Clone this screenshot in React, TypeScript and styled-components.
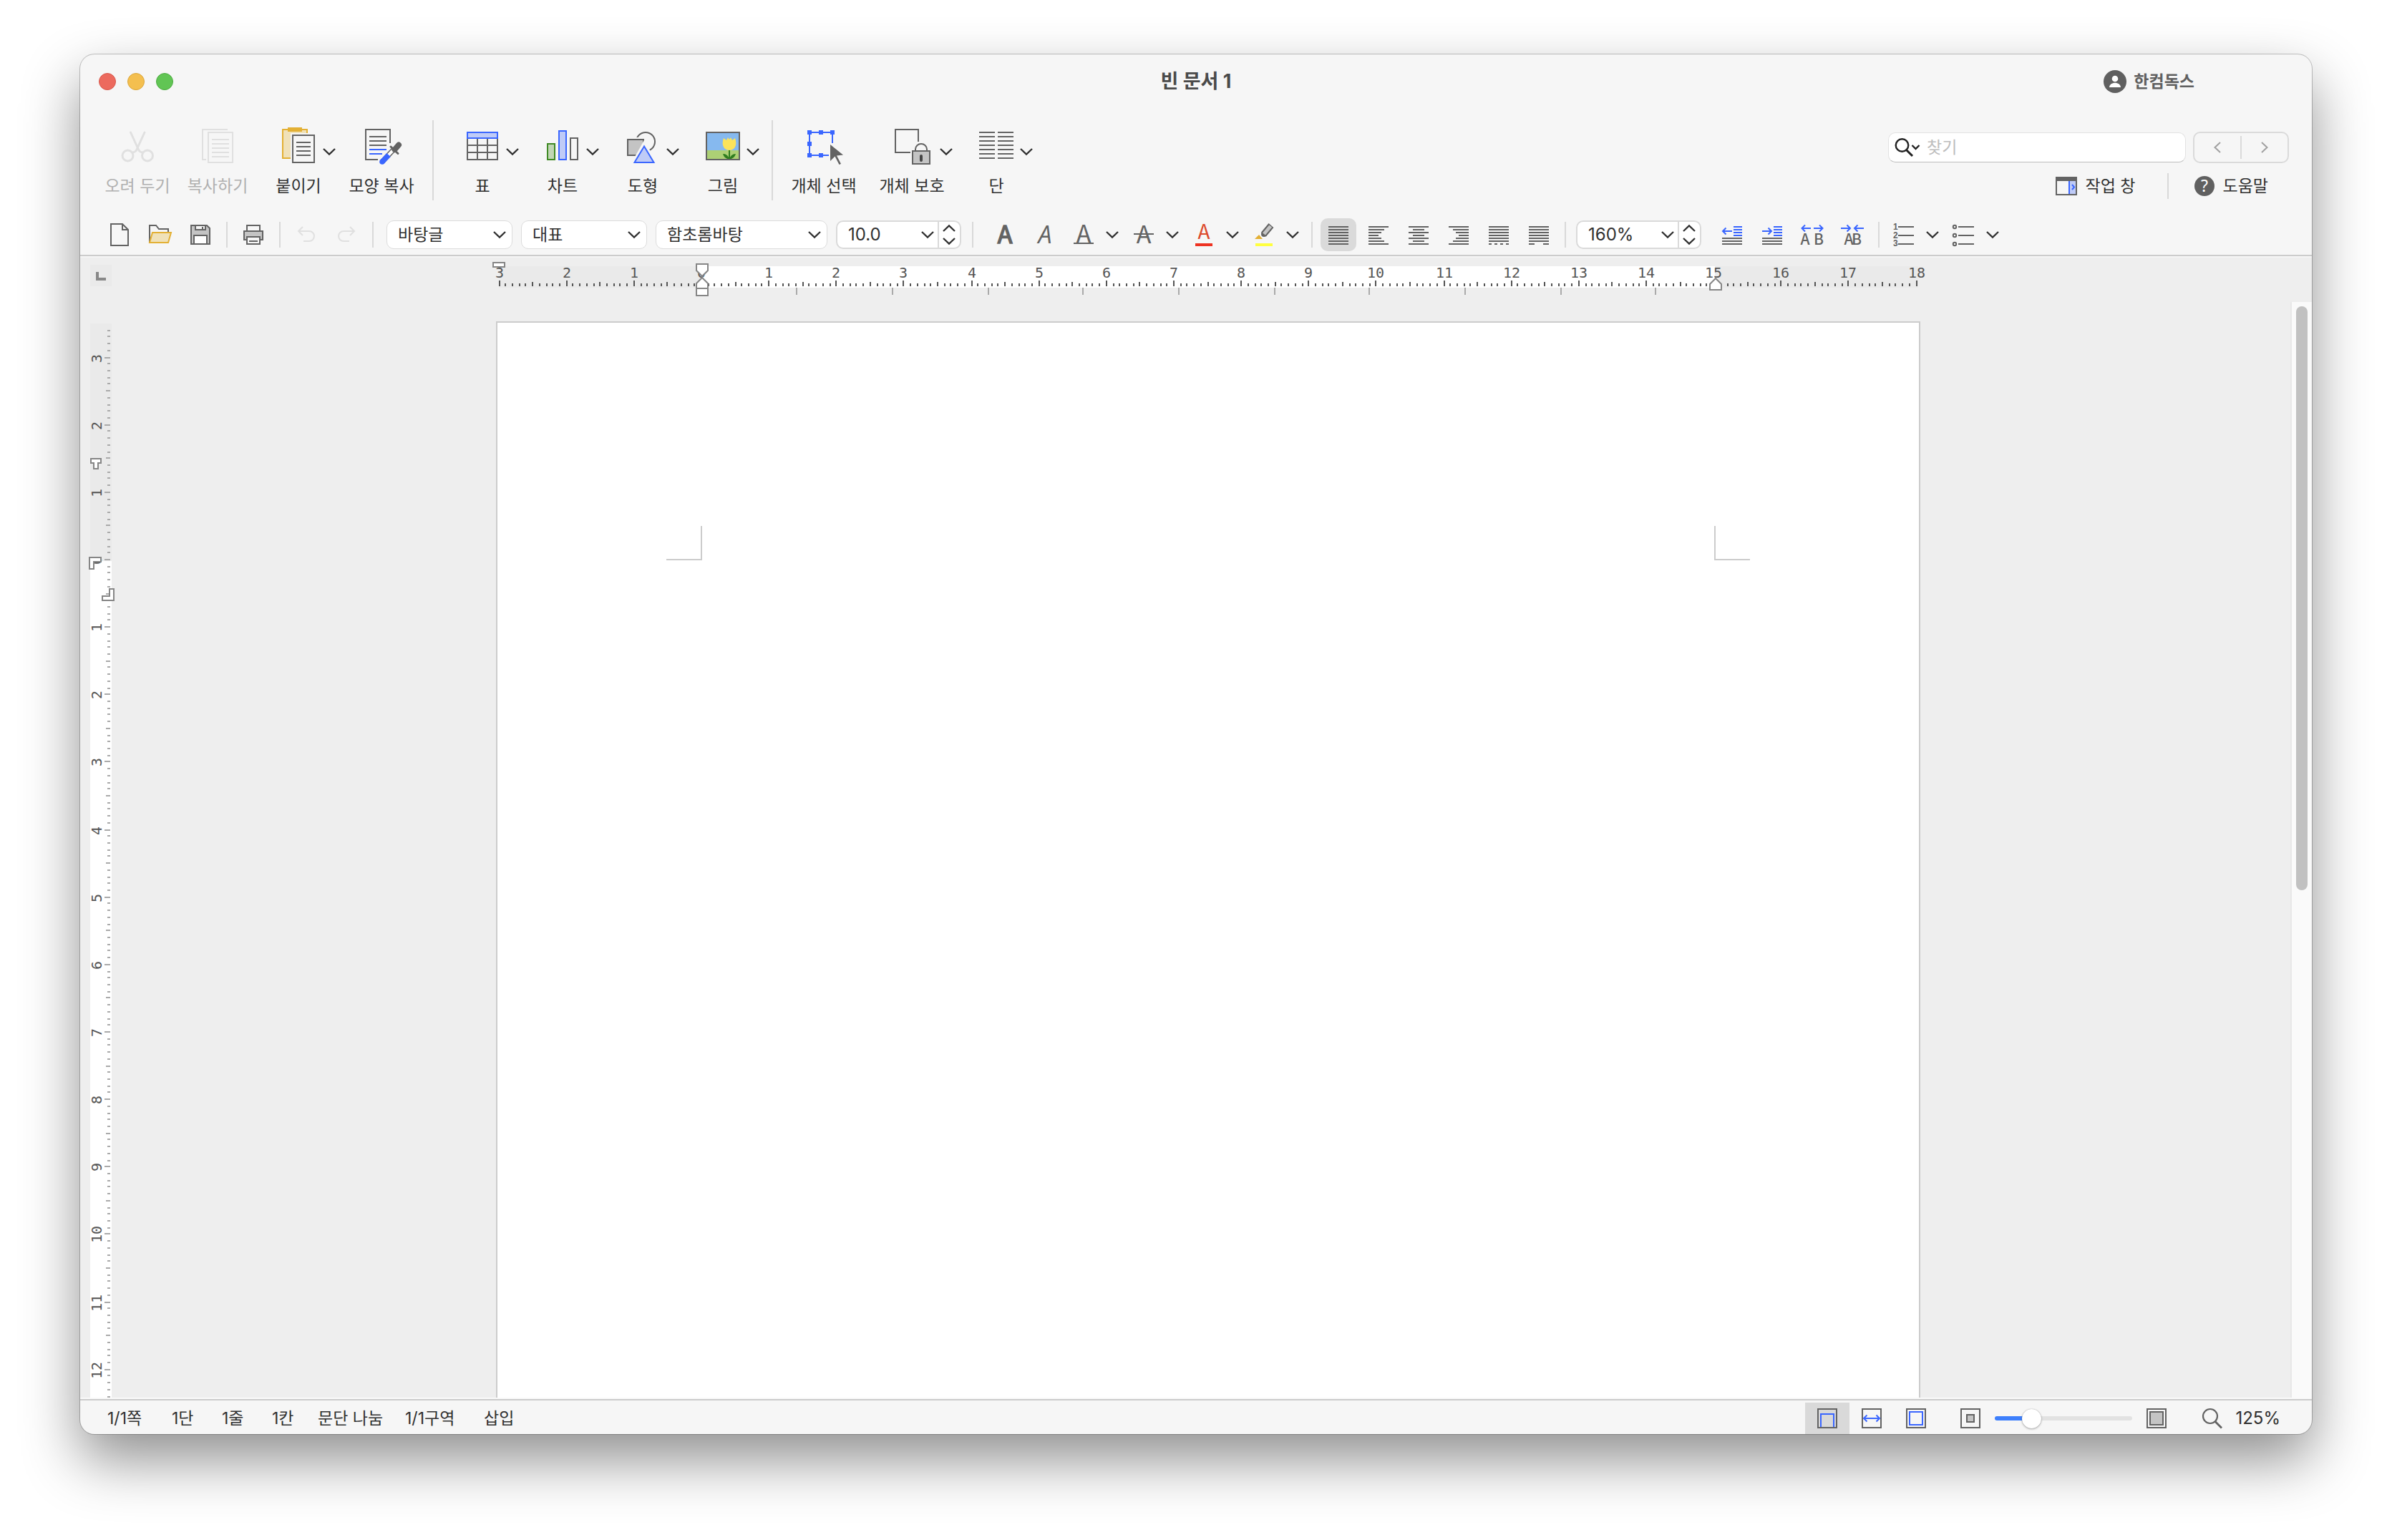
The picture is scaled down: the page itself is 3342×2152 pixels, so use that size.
import React from "react";
import styled, { createGlobalStyle } from "styled-components";

const GRAY = "#636363";
const MID = "#c4c4c4";
const BLUE = "#3a66ff";
const SKY = "#bfcbf7";
const GOLD = "#e3b034";
const SAND = "#f0e1b8";
const OFF = "#e0e0e0";
const CHROME = "#f6f6f6";
const SANS = `Inter, "Noto Sans CJK KR", sans-serif`;

const GlobalStyle = createGlobalStyle`
  *, *::before, *::after { box-sizing: border-box; }
  body { margin: 0; background: #fff; font-family: ${SANS}; color: #303030; }
  button, input, select { font: inherit; color: inherit; }
  svg { display: block; overflow: visible; flex: none; }
`;

/* ---------- Window ---------- */

const Desktop = styled.div`
  height: 100vh;
  padding: 76px 112px 148px;
  display: flex;
`;

const Window = styled.div`
  flex: 1;
  min-width: 0;
  display: flex;
  flex-direction: column;
  overflow: hidden;
  border-radius: 20px;
  background: ${CHROME};
  box-shadow: 0 0 0 1px rgba(0, 0, 0, 0.22), 0 36px 80px rgba(0, 0, 0, 0.44);
`;

const TitleBar = styled.header`
  height: 76px;
  display: grid;
  grid-template-columns: 1fr auto 1fr;
  align-items: center;
`;

const Lights = styled.div`
  display: flex;
  gap: 16px;
  padding-left: 26px;
`;

const Light = styled.button<{ $fill: string; $edge: string }>`
  width: 24px;
  height: 24px;
  padding: 0;
  border: 1px solid ${(p) => p.$edge};
  border-radius: 50%;
  background: ${(p) => p.$fill};
`;

const Title = styled.h1`
  margin: 0;
  font-size: 27px;
  line-height: 36px;
  font-weight: 700;
  color: #4a4a4a;
`;

const Account = styled.button`
  justify-self: end;
  display: flex;
  align-items: center;
  gap: 10px;
  margin-right: 164px;
  padding: 0;
  border: 0;
  background: none;
  font-size: 23px;
  line-height: 32px;
  font-weight: 700;
  color: #606060;
`;

/* ---------- Ribbon ---------- */

const Ribbon = styled.div`
  height: 148px;
  display: flex;
  align-items: flex-start;
  padding: 0 32px 0 24px;
`;

const Divider = styled.span<{ $top: number; $height: number; $before: number; $after: number }>`
  flex: none;
  width: 2px;
  height: ${(p) => p.$height}px;
  margin: ${(p) => p.$top}px ${(p) => p.$after}px 0 ${(p) => p.$before}px;
  background: #d9d9d9;
`;

const EditTools = styled.div`
  display: grid;
  grid-template-columns: 112px 112px 112px 122px;
  padding-top: 24px;
`;

const InsertTools = styled.div`
  display: flex;
  gap: 28px;
  padding-top: 24px;
`;

const ToolCell = styled.div`
  display: flex;
  align-items: flex-start;
  justify-content: flex-end;
`;

const Tool = styled.button<{ $width?: number }>`
  width: ${(p) => p.$width ?? 60}px;
  display: flex;
  flex-direction: column;
  align-items: center;
  gap: 14px;
  padding: 0;
  border: 0;
  background: none;
  font-size: 23px;
  line-height: 28px;
  white-space: nowrap;
  &:disabled { color: #b0b0b0; }
`;

const ArrowButton = styled.button<{ $width: number; $height: number }>`
  width: ${(p) => p.$width}px;
  height: ${(p) => p.$height}px;
  display: flex;
  align-items: center;
  justify-content: center;
  padding: 0;
  border: 0;
  background: none;
`;

const Utilities = styled.div`
  margin-left: auto;
  padding-top: 32px;
  display: flex;
  flex-direction: column;
  gap: 14px;
`;

const SearchRow = styled.div`
  display: flex;
  align-items: center;
  gap: 10px;
`;

const SearchBox = styled.label`
  width: 416px;
  height: 42px;
  display: flex;
  align-items: center;
  gap: 10px;
  padding-left: 9px;
  border: 1px solid #e2e2e2;
  border-bottom-color: #bdbdbd;
  border-radius: 10px;
  background: #fff;
`;

const SearchInput = styled.input`
  flex: 1;
  min-width: 0;
  padding: 0;
  border: 0;
  outline: 0;
  background: none;
  font-size: 23px;
  line-height: 32px;
  &::placeholder { color: #bdbdbd; opacity: 1; }
`;

const Stepper = styled.div`
  width: 134px;
  height: 44px;
  display: flex;
  align-items: center;
  border: 2px solid #dadada;
  border-radius: 10px;
`;

const StepButton = styled.button`
  flex: 1;
  height: 32px;
  display: grid;
  place-items: center;
  padding: 0;
  border: 0;
  background: none;
  & + & { border-left: 2px solid #dadada; }
`;

const LinkRow = styled.div`
  height: 36px;
  display: flex;
  align-items: center;
  justify-content: flex-end;
  padding-right: 29px;
`;

const LinkButton = styled.button`
  display: flex;
  align-items: center;
  gap: 12px;
  padding: 0;
  border: 0;
  background: none;
  font-size: 23px;
  line-height: 28px;
`;

/* ---------- Format bar ---------- */

const FormatBar = styled.div`
  height: 56px;
  display: flex;
  align-items: center;
  padding: 0 28px;
`;

const Group = styled.div<{ $gap?: number }>`
  display: flex;
  align-items: center;
  gap: ${(p) => p.$gap ?? 0}px;
`;

const IndentGroup = styled(Group)`
  margin-left: 15px;
`;

const IconButton = styled.button<{ $width?: number; $active?: boolean }>`
  width: ${(p) => p.$width ?? 56}px;
  height: 46px;
  display: grid;
  place-items: center;
  padding: 0;
  border: 0;
  border-radius: 10px;
  background: ${(p) => (p.$active ? "#dadada" : "none")};
`;

const SelectShell = styled.div<{ $width: number }>`
  width: ${(p) => p.$width}px;
  height: 40px;
  display: grid;
  align-items: center;
  border: 1px solid #dcdcdc;
  border-radius: 10px;
  background: #fff;
  & > * { grid-area: 1 / 1; }
  & > svg { justify-self: end; margin-right: 8px; pointer-events: none; }
`;

const Select = styled.select`
  width: 100%;
  height: 38px;
  padding: 0 32px 0 15px;
  border: 0;
  border-radius: 10px;
  outline: 0;
  background: none;
  appearance: none;
  font-size: 23px;
`;

const NumberShell = styled.div`
  width: 175px;
  height: 40px;
  display: flex;
  align-items: center;
  overflow: hidden;
  border: 2px solid #dadada;
  border-radius: 10px;
  background: #fff;
`;

const NumberInput = styled.input`
  flex: 1;
  min-width: 0;
  padding: 0 0 0 15px;
  border: 0;
  outline: 0;
  background: none;
  font-size: 24px;
  line-height: 32px;
`;

const Spinner = styled.div`
  width: 31px;
  height: 36px;
  display: grid;
  grid-template-rows: 1fr 1fr;
  border-left: 2px solid #dadada;
`;

/* ---------- Work area ---------- */

const Workspace = styled.div`
  flex: 1;
  min-height: 0;
  display: grid;
  grid-template-columns: 64px minmax(0, 1fr) 30px;
  grid-template-rows: 62px minmax(0, 1fr);
  border-top: 2px solid #cccccc;
  box-shadow: inset 0 2px 0 #f5f5f5, inset 0 -2px 0 #fafafa;
  background: #eeeeee;
  padding: 2px 0;
`;

const TabCorner = styled.button`
  width: 30px;
  height: 30px;
  margin: 10px 0 0 14px;
  padding: 0;
  border: 0;
  background: #eaeaea;
`;

const RulerLane = styled.div`
  grid-column: 2 / 4;
  padding-right: 30px;
  display: flex;
  justify-content: center;
`;

const SideRuler = styled.div`
  overflow: hidden;
`;

const Canvas = styled.main`
  display: flex;
  justify-content: center;
  padding-top: 27px;
  overflow: hidden;
`;

const Page = styled.section`
  width: 1990px;
  flex: none;
  display: flex;
  justify-content: space-between;
  padding: 284px 236px 0;
  border: 2px solid #cccccc;
  border-bottom: 0;
  background: #fff;
`;

const MarginMark = styled.span<{ $side: "left" | "right" }>`
  width: 50px;
  height: 48px;
  border-bottom: 2px solid #cccccc;
  border-${(p) => (p.$side === "left" ? "right" : "left")}: 2px solid #cccccc;
`;

const ScrollTrack = styled.div`
  padding: 6px 6px 0;
  border-left: 2px solid #e8e8e8;
  background: #fafafa;
`;

const ScrollThumb = styled.div`
  width: 16px;
  height: 53.5%;
  border-radius: 8px;
  background: #c1c1c1;
`;

/* ---------- Status bar ---------- */

const StatusBar = styled.footer`
  height: 49px;
  display: flex;
  align-items: center;
  justify-content: space-between;
  border-top: 2px solid #cccccc;
  padding: 2px 44px 0 38px;
`;

const StatusInfo = styled.div`
  display: grid;
  grid-template-columns: 90px 70px 70px 64px 122px 110px auto;
  font-size: 23px;
  line-height: 32px;
  white-space: nowrap;
`;

const StatusView = styled.div`
  display: flex;
  align-items: center;
`;

const ViewButton = styled.button<{ $active?: boolean }>`
  width: 62px;
  height: 44px;
  display: grid;
  place-items: center;
  padding: 0;
  border: 0;
  background: ${(p) => (p.$active ? "#d9d9d9" : "none")};
`;

const ZoomControl = styled.div`
  display: flex;
  align-items: center;
  margin-left: 29px;
`;

const ZoomEdge = styled.button`
  width: 32px;
  height: 44px;
  display: grid;
  place-items: center;
  padding: 0;
  border: 0;
  background: none;
`;

const ZoomSlider = styled.input`
  width: 192px;
  height: 28px;
  margin: 0 18px;
  appearance: none;
  background: none;
  &::-webkit-slider-runnable-track {
    height: 6px;
    border-radius: 3px;
    background: linear-gradient(to right, #3d7ffc 27%, #e2e2e2 27%);
  }
  &::-webkit-slider-thumb {
    appearance: none;
    width: 27px;
    height: 27px;
    margin-top: -10px;
    border-radius: 50%;
    background: #fff;
    box-shadow: 0 0 1px rgba(0, 0, 0, 0.35), 0 1px 3px rgba(0, 0, 0, 0.3);
  }
`;

const ZoomValue = styled.button`
  display: flex;
  align-items: center;
  gap: 18px;
  margin-left: 48px;
  padding: 0;
  border: 0;
  background: none;
  font-size: 24px;
  line-height: 32px;
`;

/* ---------- Icons ---------- */

type Kids = { children?: React.ReactNode };

const Big = ({ children }: Kids) => (
  <svg width="48" height="56" viewBox="0 0 48 56" fill="none" stroke={GRAY} strokeWidth="2" aria-hidden="true">
    {children}
  </svg>
);

const Small = ({ children }: Kids) => (
  <svg width="32" height="40" viewBox="0 0 32 40" fill="none" stroke={GRAY} strokeWidth="2" aria-hidden="true">
    {children}
  </svg>
);

const Box = ({ children }: Kids) => (
  <svg width="32" height="32" viewBox="0 0 32 32" fill="none" stroke={GRAY} strokeWidth="2" aria-hidden="true">
    <rect x="3" y="3" width="26" height="26" />
    {children}
  </svg>
);

const Down = () => (
  <svg width="18" height="10" viewBox="0 0 18 10" fill="none" stroke="#303030" strokeWidth="2.3" aria-hidden="true">
    <path d="M1 1L9 8.6L17 1" />
  </svg>
);

const Up = () => (
  <svg width="18" height="10" viewBox="0 0 18 10" fill="none" stroke="#303030" strokeWidth="2.3" aria-hidden="true">
    <path d="M1 9L9 1.4L17 9" />
  </svg>
);

const CutIcon = () => (
  <Big>
    <g stroke={OFF} strokeWidth="3" strokeLinecap="round">
      <path d="M14.5 9L25.5 33Q27 36.5 31 37" />
      <path d="M34 9L23 33Q21.5 36.5 17.5 37" />
      <circle cx="10.5" cy="41.5" r="7.5" />
      <circle cx="38" cy="41.5" r="7.5" />
    </g>
  </Big>
);

const CopyIcon = () => (
  <Big>
    <g stroke={OFF}>
      <path d="M38 5H3V47H8" />
      <rect x="11" y="9" width="34" height="42" />
      <path d="M16 19H40M16 25H40M16 31H40M16 37H40M16 43H40" />
    </g>
  </Big>
);

const PasteIcon = () => (
  <Big>
    <rect x="2" y="5" width="34" height="40" fill={SAND} stroke={GOLD} />
    <rect x="9" y="2" width="20" height="6" fill={GOLD} stroke="none" />
    <rect x="13" y="10" width="26" height="38" fill={CHROME} stroke="none" />
    <rect x="16" y="13" width="30" height="38" />
    <path d="M21 23H41M21 29H41M21 35H41M21 41H41" />
  </Big>
);

const BrushIcon = () => (
  <Big>
    <path d="M19 47H2V5H36V24" />
    <path d="M7 15H31M7 21H31M7 27H31" />
    <path d="M7 33H31M7 39H25" stroke={BLUE} />
    <path d="M25.5 49.5L40 34" strokeWidth="7" strokeLinecap="round" />
    <path d="M31 43.5L40 34" stroke="#fff" strokeWidth="4" />
    <path d="M25.5 49.5L34 40.5" stroke={BLUE} strokeWidth="7.5" />
    <circle cx="25" cy="50" r="3.8" fill={BLUE} stroke="none" />
    <path d="M37 29L47 38.5" strokeWidth="3" strokeLinecap="round" />
    <path d="M42.5 33L48 26.5" strokeWidth="8" strokeLinecap="round" />
  </Big>
);

const TableIcon = () => (
  <Big>
    <path d="M3 18V47H45V18M17 18V47M31 18V47M3 27H45M3 37H45" />
    <rect x="3" y="9" width="42" height="8" fill={SKY} stroke={BLUE} />
  </Big>
);

const ChartIcon = () => (
  <Big>
    <rect x="3" y="25" width="10" height="22" fill="#c1d6b5" stroke="#3f8a24" />
    <rect x="19" y="7" width="10" height="40" fill={SKY} stroke={BLUE} />
    <rect x="35" y="17" width="10" height="30" />
  </Big>
);

const ShapeIcon = () => (
  <Big>
    <circle cx="28" cy="22" r="13" />
    <rect x="0" y="16" width="27" height="26" fill={CHROME} stroke="none" />
    <rect x="3" y="19" width="22" height="22" fill={MID} />
    <path d="M26 26L12 51H40Z" fill={SKY} stroke={CHROME} strokeWidth="6" />
    <path d="M26 28.5L12.5 51H39.5Z" fill={SKY} stroke={BLUE} />
  </Big>
);

const PictureIcon = () => (
  <Big>
    <rect x="1" y="9" width="46" height="38" fill="#86b9ef" stroke="none" />
    <rect x="1" y="34" width="46" height="13" fill="#add075" stroke="none" />
    <path d="M33 33V47" stroke="#2f7d1f" />
    <path d="M33 46.5Q26 46 24 39Q31 39 33 46.5ZM33 46.5Q40 46 42 39Q35 39 33 46.5Z" fill="#2f7d1f" stroke="none" />
    <path d="M25 17L29 20L31 16L33 19L35 16L37 20L41 17Q43 22 42 27Q40 34 33 34Q26 34 24 27Q23 22 25 17Z" fill="#fce35a" stroke="none" />
    <rect x="1" y="9" width="46" height="38" />
  </Big>
);

const PickIcon = () => (
  <Big>
    <path d="M36 24V9H4V41H31" stroke={BLUE} />
    {[[4, 9], [20, 9], [36, 9], [4, 25], [4, 41], [20, 41]].map(([x, y]) => (
      <rect key={`${x}-${y}`} x={x - 3} y={y - 3} width="6" height="6" fill={BLUE} stroke="none" />
    ))}
    <path d="M33 26L51 40.5L42 41.5L48 53L45.5 54L39.5 42.5L33 49Z" fill={GRAY} stroke="none" />
  </Big>
);

const LockIcon = () => (
  <Big>
    <path d="M33 22V5H1V37H22" />
    <path d="M29 35V32.5A8 7.5 0 0 1 45 32.5V35" />
    <rect x="25" y="35" width="24" height="18" fill={MID} />
    <rect x="35" y="40" width="4" height="10" rx="2" fill="#444" stroke="none" />
  </Big>
);

const ColumnIcon = () => (
  <Big>
    {[9, 15, 21, 27, 33, 39, 45].map((y) => (
      <path key={y} d={`M0 ${y}H22M26 ${y}H48`} />
    ))}
  </Big>
);

const NewIcon = () => (
  <Small>
    <path d="M3 5H19L27 13V35H3Z" />
    <path d="M19 5V13H27" />
  </Small>
);

const OpenIcon = () => (
  <Small>
    <path d="M1 31V7H10L14 12H27V17" />
    <path d="M5 17H31L27 31H1Z" fill={SAND} stroke={GOLD} />
  </Small>
);

const SaveIcon = () => (
  <Small>
    <path d="M3 7H25L29 11V33H3Z" fill={MID} />
    <rect x="9" y="7" width="14" height="6" fill={CHROME} />
    <path d="M19 9V12" />
    <rect x="7" y="21" width="18" height="12" fill="#fff" />
  </Small>
);

const PrintIcon = () => (
  <Small>
    <rect x="7" y="7" width="18" height="8" />
    <rect x="3" y="15" width="26" height="12" fill={MID} />
    <rect x="7" y="23" width="18" height="10" fill={CHROME} />
    <path d="M10 29H22" />
  </Small>
);

const UndoIcon = () => (
  <Small>
    <path d="M11 9L5 15L11 21M5 15H20A7 7 0 0 1 20 29H12" stroke={OFF} />
  </Small>
);

const RedoIcon = () => (
  <Small>
    <path d="M21 9L27 15L21 21M27 15H12A7 7 0 0 0 12 29H20" stroke={OFF} />
  </Small>
);

type LetterProps = Kids & { size?: number; bold?: boolean; italic?: boolean; color?: string; y?: number };

const LetterIcon = ({ size = 34, bold, italic, color = GRAY, y = 32, children }: LetterProps) => (
  <Small>
    <text
      x="16"
      y={y}
      textAnchor="middle"
      fill={color}
      stroke={bold ? color : "none"}
      strokeWidth="1.5"
      fontFamily={italic ? '"Open Sans", sans-serif' : '"Noto Sans CJK KR", sans-serif'}
      fontSize={size}
      fontStyle={italic ? "italic" : "normal"}
    >
      A
    </text>
    {children}
  </Small>
);

const MarkerIcon = () => (
  <Small>
    <path d="M26 7L15.5 19.5" strokeWidth="9" />
    <circle cx="16" cy="19" r="4" fill={GRAY} stroke="none" />
    <path d="M25.2 8L16 19" stroke={MID} strokeWidth="5" />
    <path d="M3 26L9 20L14 26Z" fill={GOLD} stroke="none" />
    <rect x="4" y="32" width="24" height="4" fill="#ffff3f" stroke="none" />
  </Small>
);

/* Each entry is one text line, as [start, end] segments. */
const ROWS = [9, 13, 17, 21, 25, 29, 33];
const FULL: number[][] = [[2, 30]];
const fromEdges = (ends: number[][]) => ends.map((e) => [e]);
const ALIGNS: { name: string; rows: number[][][] }[] = [
  { name: "양쪽 정렬", rows: ROWS.map(() => FULL) },
  { name: "왼쪽 정렬", rows: fromEdges([[2, 30], [2, 24], [2, 20], [2, 16], [2, 20], [2, 24], [2, 30]]) },
  { name: "가운데 정렬", rows: fromEdges([[2, 30], [8, 24], [2, 30], [8, 24], [2, 30], [8, 24], [2, 30]]) },
  { name: "오른쪽 정렬", rows: fromEdges([[2, 30], [8, 30], [12, 30], [16, 30], [12, 30], [8, 30], [2, 30]]) },
  { name: "배분 정렬", rows: [...ROWS.slice(1).map(() => FULL), [[2, 6], [10, 14], [18, 22], [26, 30]]] },
  { name: "나눔 정렬", rows: [...ROWS.slice(1).map(() => FULL), [[2, 10], [22, 30]]] },
];

const AlignIcon = ({ rows }: { rows: number[][][] }) => (
  <Small>
    {rows.map((segments, i) => (
      <path key={i} d={segments.map(([a, b]) => `M${a} ${ROWS[i]}H${b}`).join("")} />
    ))}
  </Small>
);

const IndentIcon = ({ out }: { out?: boolean }) => (
  <Small>
    <path d="M18 9H30M18 13H30M18 17H30M18 21H30" stroke={BLUE} />
    <path d={out ? "M16 15H3M7.5 10.5L3 15L7.5 19.5" : "M2 15H15M10.5 10.5L15 15L10.5 19.5"} stroke={BLUE} />
    <path d="M2 25H30M2 29H30M2 33H30" />
  </Small>
);

const SpacingIcon = ({ wide }: { wide?: boolean }) => (
  <Small>
    <path
      d={
        wide
          ? "M14 11H1.5M6 6.5L1.5 11L6 15.5M18 11H30.5M26 6.5L30.5 11L26 15.5"
          : "M0 11H13M8.5 6.5L13 11L8.5 15.5M32 11H19M23.5 6.5L19 11L23.5 15.5"
      }
      stroke={BLUE}
    />
    <g fill={GRAY} stroke="none" fontFamily='"Noto Sans CJK KR", sans-serif' fontSize="21" fontWeight="500" textAnchor="middle">
      <text x={wide ? 6 : 11} y="34">A</text>
      <text x={wide ? 25 : 22} y="34">B</text>
    </g>
  </Small>
);

const NumberedIcon = () => (
  <Small>
    <path d="M8 9H30M8 21H30M8 33H30" />
    <g fill={GRAY} stroke="none" fontFamily='"Liberation Sans", sans-serif' fontSize="12" fontWeight="700">
      <text x="1" y="13">1</text>
      <text x="1" y="25">2</text>
      <text x="1" y="36">3</text>
    </g>
  </Small>
);

const BulletIcon = () => (
  <Small>
    <path d="M8 9H30M8 21H30M8 33H30" />
    {[9, 21, 33].map((y) => <circle key={y} cx="3" cy={y} r="2.2" />)}
  </Small>
);

const Lens = ({ color, size }: { color: string; size: number }) => (
  <svg width={size} height={size} viewBox="0 0 28 28" fill="none" stroke={color} strokeWidth="2.2" aria-hidden="true">
    <circle cx="11" cy="11" r="10" />
    <path d="M18 18.5L27 27.5" strokeWidth="2.8" />
  </svg>
);

/* ---------- Rulers ---------- */

const MM = 4.7143;
const range = (from: number, to: number) => Array.from({ length: to - from + 1 }, (_, i) => from + i);
const tickAt = (mm: number) => 2 * Math.floor(mm * MM);
const tickSize = (mm: number) => (mm % 10 === 0 ? 8 : mm % 5 === 0 ? 6 : 4);

const HorizontalRuler = () => (
  <svg width="1990" height="62" viewBox="0 0 1990 62" role="img" aria-label="가로 눈금자">
    <rect x="4" y="12" width="1983" height="30" fill="#eaeaea" />
    <rect x="288" y="12" width="1415" height="30" fill="#fff" />
    <g fill="#555" fontFamily='"DejaVu Sans Mono", monospace' fontSize="20" textAnchor="middle">
      {range(0, 210).map((mm) => (
        <rect key={mm} x={4 + tickAt(mm)} y={40 - tickSize(mm)} width="2" height={tickSize(mm)} />
      ))}
      {range(0, 21).map((cm) => (
        <text key={cm} x={5 + tickAt(cm * 10)} y="28">{Math.abs(cm - 3)}</text>
      ))}
    </g>
    {range(1, 10).map((n) => (
      <rect key={n} x={287 + 2 * Math.floor(n * 66.67)} y="42" width="2" height="10" fill="#aaa" />
    ))}
    <g fill="#fff" stroke="#868686" strokeWidth="2">
      <rect x="-4" y="7" width="16" height="6" />
      <path d="M280 9H296V18L288 26L280 18Z" />
      <path d="M288 28L296 36V43H280V36Z" />
      <rect x="280" y="43" width="16" height="10" />
      <path d="M1704 29L1712 37V45H1696V37Z" />
    </g>
  </svg>
);

const VerticalRuler = () => (
  <svg width="64" height="100%" role="img" aria-label="세로 눈금자">
    <rect x="14" y="30" width="30" height="332" fill="#eaeaea" />
    <rect x="14" y="362" width="30" height="100%" fill="#fff" />
    {range(-4, 260).map((mm) => (
      <rect key={mm} x={42 - tickSize(mm)} y={77 + tickAt(mm)} width={tickSize(mm)} height="2" fill="#aaa" />
    ))}
    <g fill="#555" fontFamily='"DejaVu Sans Mono", monospace' fontSize="20" textAnchor="middle">
      {range(0, 15).map((cm) => (
        <text key={cm} transform={`translate(30 ${79 + tickAt(cm * 10)}) rotate(-90)`}>{Math.abs(cm - 3)}</text>
      ))}
    </g>
    <g fill="#fff" stroke="#868686" strokeWidth="2">
      <path d="M15 219H29V225H25V233H19V225H15Z" />
      <path d="M13 357H29V363H19V373H13Z" />
      <path d="M41 401H47V417H31V411H41Z" />
    </g>
  </svg>
);

/* ---------- Composite controls ---------- */

type SplitToolProps = { label: string; icon: React.ReactNode; width?: number };

const SplitTool = ({ label, icon, width }: SplitToolProps) => (
  <ToolCell>
    <Tool $width={width}>
      {icon}
      {label}
    </Tool>
    <ArrowButton $width={24} $height={72} aria-label={`${label} 더 보기`}>
      <Down />
    </ArrowButton>
  </ToolCell>
);

const SplitIcon = ({ label, children }: Kids & { label: string }) => (
  <Group>
    <IconButton $width={52} aria-label={label}>{children}</IconButton>
    <ArrowButton $width={28} $height={46} aria-label={`${label} 더 보기`}>
      <Down />
    </ArrowButton>
  </Group>
);

const DropDown = ({ label, value, width }: { label: string; value: string; width: number }) => (
  <SelectShell $width={width}>
    <Select aria-label={label} defaultValue={value}>
      <option value={value}>{value}</option>
    </Select>
    <Down />
  </SelectShell>
);

const NumberBox = ({ label, value }: { label: string; value: string }) => (
  <NumberShell>
    <NumberInput aria-label={label} defaultValue={value} />
    <ArrowButton $width={28} $height={36} aria-label={`${label} 목록`}>
      <Down />
    </ArrowButton>
    <Spinner>
      <ArrowButton $width={27} $height={18} aria-label={`${label} 늘리기`}><Up /></ArrowButton>
      <ArrowButton $width={27} $height={18} aria-label={`${label} 줄이기`}><Down /></ArrowButton>
    </Spinner>
  </NumberShell>
);

const BarDivider = ({ before = 8, after = 8 }: { before?: number; after?: number }) => (
  <Divider $top={0} $height={36} $before={before} $after={after} />
);

export default function App() {
  return (
    <>
      <GlobalStyle />
      <Desktop>
        <Window>
          <TitleBar>
            <Lights>
              <Light $fill="#ec6a5e" $edge="#d8584c" aria-label="닫기" />
              <Light $fill="#f4bf4f" $edge="#dba63a" aria-label="최소화" />
              <Light $fill="#61c554" $edge="#4dab41" aria-label="확대" />
            </Lights>
            <Title>빈 문서 1</Title>
            <Account>
              <svg width="32" height="32" viewBox="0 0 32 32" aria-hidden="true">
                <circle cx="16" cy="16" r="16" fill="#606060" />
                <circle cx="16" cy="12" r="4.3" fill="#fff" />
                <path d="M8 24C8.5 15.5 23.5 15.5 24 24Z" fill="#fff" />
              </svg>
              한컴독스
            </Account>
          </TitleBar>

          <Ribbon>
            <EditTools>
              <Tool $width={112} disabled><CutIcon />오려 두기</Tool>
              <Tool $width={112} disabled><CopyIcon />복사하기</Tool>
              <SplitTool label="붙이기" icon={<PasteIcon />} width={62} />
              <Tool $width={122}><BrushIcon />모양 복사</Tool>
            </EditTools>
            <Divider $top={16} $height={112} $before={10} $after={38} />
            <InsertTools>
              <SplitTool label="표" icon={<TableIcon />} />
              <SplitTool label="차트" icon={<ChartIcon />} />
              <SplitTool label="도형" icon={<ShapeIcon />} />
              <SplitTool label="그림" icon={<PictureIcon />} />
            </InsertTools>
            <Divider $top={16} $height={112} $before={14} $after={12} />
            <InsertTools>
              <Tool $width={118}><PickIcon />개체 선택</Tool>
              <SplitTool label="개체 보호" icon={<LockIcon />} width={72} />
              <SplitTool label="단" icon={<ColumnIcon />} />
            </InsertTools>

            <Utilities>
              <SearchRow>
                <SearchBox>
                  <svg width="34" height="26" viewBox="0 0 34 26" fill="none" stroke="#222" strokeWidth="2.4" aria-hidden="true">
                    <circle cx="9.5" cy="10" r="8.8" />
                    <path d="M15.5 16.5L24 25" strokeWidth="3" />
                    <path d="M23.5 10L28.5 15L33.5 10" />
                  </svg>
                  <SearchInput type="text" placeholder="찾기" aria-label="찾기" />
                </SearchBox>
                <Stepper>
                  <StepButton aria-label="이전 찾기">
                    <svg width="10" height="16" viewBox="0 0 10 16" fill="none" stroke="#a0a0a0" strokeWidth="2" aria-hidden="true"><path d="M9 1L1.5 8L9 15" /></svg>
                  </StepButton>
                  <StepButton aria-label="다음 찾기">
                    <svg width="10" height="16" viewBox="0 0 10 16" fill="none" stroke="#a0a0a0" strokeWidth="2" aria-hidden="true"><path d="M1 1L8.5 8L1 15" /></svg>
                  </StepButton>
                </Stepper>
              </SearchRow>
              <LinkRow>
                <LinkButton>
                  <svg width="30" height="26" viewBox="0 0 30 26" fill="none" stroke={GRAY} strokeWidth="2" aria-hidden="true">
                    <rect x="1" y="1" width="28" height="24" />
                    <rect x="0" y="0" width="30" height="6" fill={GRAY} stroke="none" />
                    <rect x="19" y="6" width="9" height="18" fill={SKY} stroke="none" />
                    <path d="M19 6V24M23 11L26 14.5L23 18" stroke={BLUE} />
                  </svg>
                  작업 창
                </LinkButton>
                <Divider $top={0} $height={36} $before={44} $after={36} />
                <LinkButton>
                  <svg width="28" height="28" viewBox="0 0 28 28" aria-hidden="true">
                    <circle cx="14" cy="14" r="14" fill="#606060" />
                    <text x="14" y="22" textAnchor="middle" fill="#fff" fontFamily='"Noto Sans", sans-serif' fontSize="23">?</text>
                  </svg>
                  도움말
                </LinkButton>
              </LinkRow>
            </Utilities>
          </Ribbon>

          <FormatBar>
            <Group>
              <IconButton aria-label="새 문서"><NewIcon /></IconButton>
              <IconButton aria-label="불러오기"><OpenIcon /></IconButton>
              <IconButton aria-label="저장하기"><SaveIcon /></IconButton>
            </Group>
            <BarDivider />
            <IconButton aria-label="인쇄"><PrintIcon /></IconButton>
            <BarDivider />
            <Group>
              <IconButton aria-label="되돌리기" disabled><UndoIcon /></IconButton>
              <IconButton aria-label="다시 실행" disabled><RedoIcon /></IconButton>
            </Group>
            <BarDivider after={18} />
            <Group $gap={12}>
              <DropDown label="스타일" value="바탕글" width={176} />
              <DropDown label="언어" value="대표" width={176} />
              <DropDown label="글꼴" value="함초롬바탕" width={240} />
              <NumberBox label="글자 크기" value="10.0" />
            </Group>
            <BarDivider before={15} after={16} />
            <IconButton aria-label="진하게"><LetterIcon bold /></IconButton>
            <IconButton aria-label="기울임"><LetterIcon italic /></IconButton>
            <Group $gap={4}>
              <SplitIcon label="밑줄">
                <LetterIcon y={31}><path d="M2 32H30" /></LetterIcon>
              </SplitIcon>
              <SplitIcon label="취소선">
                <LetterIcon><path d="M2 19H30" /></LetterIcon>
              </SplitIcon>
              <SplitIcon label="글자 색">
                <LetterIcon size={28} y={26} color="#dc4a2c">
                  <rect x="4" y="32" width="24" height="4" fill="#ee3322" stroke="none" />
                </LetterIcon>
              </SplitIcon>
              <SplitIcon label="형광펜"><MarkerIcon /></SplitIcon>
            </Group>
            <BarDivider before={12} after={11} />
            <Group $gap={6}>
              {ALIGNS.map((a, i) => (
                <IconButton key={a.name} $width={50} $active={i === 0} aria-label={a.name}>
                  <AlignIcon rows={a.rows} />
                </IconButton>
              ))}
            </Group>
            <BarDivider before={11} after={14} />
            <NumberBox label="줄 간격" value="160%" />
            <IndentGroup>
              <IconButton aria-label="왼쪽 여백 줄이기"><IndentIcon out /></IconButton>
              <IconButton aria-label="왼쪽 여백 늘리기"><IndentIcon /></IconButton>
              <IconButton aria-label="자간 넓게"><SpacingIcon wide /></IconButton>
              <IconButton aria-label="자간 좁게"><SpacingIcon /></IconButton>
            </IndentGroup>
            <BarDivider />
            <Group $gap={4}>
              <SplitIcon label="문단 번호"><NumberedIcon /></SplitIcon>
              <SplitIcon label="글머리표"><BulletIcon /></SplitIcon>
            </Group>
          </FormatBar>

          <Workspace>
            <TabCorner aria-label="탭 종류">
              <svg width="30" height="30" viewBox="0 0 30 30" fill="none" stroke="#888" strokeWidth="4" aria-hidden="true">
                <path d="M10 10V20H22" />
              </svg>
            </TabCorner>
            <RulerLane><HorizontalRuler /></RulerLane>
            <SideRuler><VerticalRuler /></SideRuler>
            <Canvas>
              <Page aria-label="문서 1쪽">
                <MarginMark $side="left" />
                <MarginMark $side="right" />
              </Page>
            </Canvas>
            <ScrollTrack><ScrollThumb /></ScrollTrack>
          </Workspace>

          <StatusBar>
            <StatusInfo>
              <span>1/1쪽</span>
              <span>1단</span>
              <span>1줄</span>
              <span>1칸</span>
              <span>문단 나눔</span>
              <span>1/1구역</span>
              <span>삽입</span>
            </StatusInfo>
            <StatusView>
              <ViewButton $active aria-label="쪽 윤곽"><Box><path d="M7 28V10H25V28" stroke={BLUE} /></Box></ViewButton>
              <ViewButton aria-label="폭 맞춤"><Box><path d="M5 16H27M9.5 11.5L5 16L9.5 20.5M22.5 11.5L27 16L22.5 20.5" stroke={BLUE} /></Box></ViewButton>
              <ViewButton aria-label="쪽 맞춤"><Box><rect x="7" y="7" width="18" height="18" stroke={BLUE} /></Box></ViewButton>
              <ZoomControl>
                <ZoomEdge aria-label="축소"><Box><rect x="11" y="11" width="10" height="10" fill={MID} /></Box></ZoomEdge>
                <ZoomSlider type="range" min={0} max={100} defaultValue={23} aria-label="확대 비율" />
                <ZoomEdge aria-label="확대"><Box><rect x="7" y="7" width="18" height="18" fill={MID} /></Box></ZoomEdge>
              </ZoomControl>
              <ZoomValue>
                <Lens color={GRAY} size={28} />
                125%
              </ZoomValue>
            </StatusView>
          </StatusBar>
        </Window>
      </Desktop>
    </>
  );
}
